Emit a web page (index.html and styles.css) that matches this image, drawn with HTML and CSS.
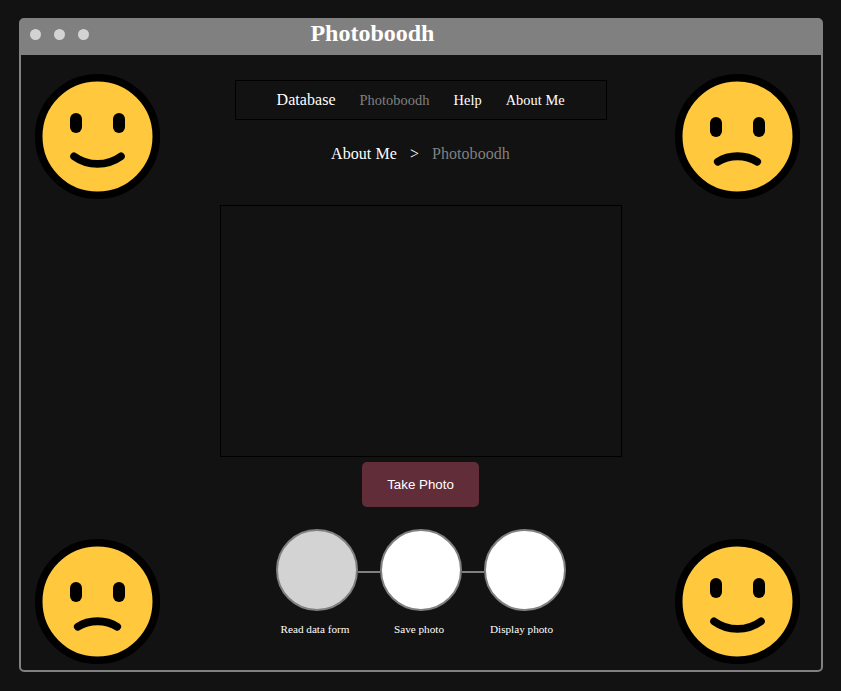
FILE: index.html
```html
<!DOCTYPE html>
<html lang="en">
<head>
<meta charset="utf-8">
<title>Photoboodh</title>
<link rel="stylesheet" href="styles.css">
</head>
<body>
<svg class="defs" aria-hidden="true">
  <symbol id="happy" viewBox="0 0 127 127">
    <circle cx="63.5" cy="63.5" r="58.8" fill="#ffc83d" stroke="#000" stroke-width="7.6"/>
    <rect x="36" y="40" width="12" height="20" rx="6"/>
    <rect x="79" y="40" width="12" height="20" rx="6"/>
    <path d="M40 83.3A40.2 40.2 0 0 0 87 83.3" fill="none" stroke="#000" stroke-width="7.6" stroke-linecap="round"/>
  </symbol>
  <symbol id="sad" viewBox="0 0 127 127">
    <circle cx="63.5" cy="63.5" r="58.8" fill="#ffc83d" stroke="#000" stroke-width="7.6"/>
    <rect x="36" y="44" width="12" height="20" rx="6"/>
    <rect x="79" y="44" width="12" height="20" rx="6"/>
    <path d="M43.8 88.7C55 81.4 72 81.4 83.2 88.7" fill="none" stroke="#000" stroke-width="7.8" stroke-linecap="round"/>
  </symbol>
</svg>
<div class="window">
  <header class="titlebar">
    <div class="dots"><i></i><i></i><i></i></div>
    <h1>Photoboodh</h1>
  </header>
  <div class="body">
    <div class="faces">
      <svg><use href="#happy"/></svg>
      <svg><use href="#sad"/></svg>
    </div>
    <main>
      <nav><a class="first">Database</a><a class="muted">Photoboodh</a><a>Help</a><a>About Me</a></nav>
      <div class="crumbs"><span>About Me</span><span>&gt;</span><span class="muted">Photoboodh</span></div>
      <div class="video"></div>
      <button>Take Photo</button>
      <div class="steps">
        <div class="step"><div class="circle active"></div><span>Read data form</span></div>
        <div class="line"></div>
        <div class="step"><div class="circle"></div><span>Save photo</span></div>
        <div class="line"></div>
        <div class="step"><div class="circle"></div><span class="last">Display photo</span></div>
      </div>
    </main>
    <div class="faces">
      <svg><use href="#sad"/></svg>
      <svg><use href="#happy"/></svg>
    </div>
  </div>
</div>
</body>
</html>
```
FILE: styles.css
```css
* { box-sizing: border-box; }
body {
  margin: 0;
  padding: 18px 18px 0 19px;
  height: 691px;
  overflow: hidden;
  background: #121212;
  color: #fff;
  font: 16px "Liberation Serif", serif;
}
.defs { display: none; }
.window {
  height: 654px;
  border: 2px solid gray;
  border-radius: 5px;
  display: flex;
  flex-direction: column;
}
.titlebar {
  height: 35px;
  background: gray;
  display: flex;
  align-items: flex-start;
}
.dots { display: flex; gap: 13px; width: 289.4px; padding: 9.4px 0 0 9.4px; }
.dots i { width: 11px; height: 11px; border-radius: 50%; background: lightgray; }
h1 { margin: 0; font-size: 24px; line-height: 27px; }
.body {
  flex: 1;
  display: flex;
  justify-content: space-between;
  padding: 18px 20px 5px 13px;
}
.faces { display: flex; flex-direction: column; justify-content: space-between; }
.faces svg { display: block; width: 127px; height: 127px; }
main {
  width: 402px;
  margin-left: 7px;
  padding-top: 7px;
  display: flex;
  flex-direction: column;
  align-items: center;
}
nav {
  width: 372px;
  height: 40px;
  border: 1px solid #000;
  padding-left: 40.6px;
  display: flex;
  align-items: baseline;
  gap: 24px;
  font-size: 14.4px;
  letter-spacing: 0.04px;
  line-height: 38px;
}
nav .first { font-size: 16px; }
.muted { color: gray; }
.crumbs { display: flex; gap: 13px; margin: 24px 1px 0 0; line-height: 20px; letter-spacing: 0.06px; }
.video { width: 402px; height: 252px; margin-top: 41px; border: 1px solid #000; flex: none; }
button {
  width: 117px;
  height: 45px;
  margin: 5px 1px 0 0;
  padding: 0;
  border: 0;
  border-radius: 5px;
  background: #612d38;
  color: #fff;
  font: 13.333px "Liberation Sans", sans-serif;
}
.steps { display: flex; margin-top: 22px; }
.step { width: 82px; display: flex; flex-direction: column; }
.circle { height: 82px; border: 2px solid gray; border-radius: 50%; background: #fff; }
.circle.active { background: lightgray; }
.step span { width: 78px; margin-top: 12px; text-align: center; white-space: nowrap; font-size: 11.2px; line-height: 13px; }
.step .last { width: 75px; }
.line { width: 22px; height: 2px; margin-top: 42px; background: gray; }
```
